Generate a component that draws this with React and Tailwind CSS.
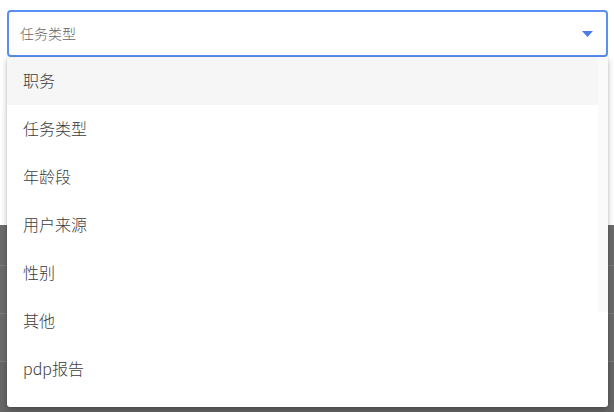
import React from 'react';

const options = ['职务', '任务类型', '年龄段', '用户来源', '性别', '其他', 'pdp报告'];

const App = () => {
  return (
    <div
      className="relative w-[614px] h-[412px] overflow-hidden bg-white"
      style={{ fontFamily: '"Noto Sans CJK SC", "Noto Sans", sans-serif' }}
    >
      {/* page behind the dropdown */}
      <div className="flex flex-col h-full">
        <div className="h-[225px] bg-white" />
        <div className="flex-1 bg-[#6b6b6b] flex flex-col">
          <div className="h-[41px] border-b border-[#7c7c7c]" />
          <div className="h-[48px] border-b border-[#7c7c7c]" />
          <div className="h-[48px] border-b border-[#7c7c7c]" />
          <div className="flex-1 bg-[#666666]" />
        </div>
      </div>

      {/* select */}
      <div className="absolute left-[7px] top-[10px] w-[601px]">
        <div className="h-[47px] flex items-center justify-between pl-[11px] pr-[13px] bg-white border-2 border-[#5a8ef0] rounded-[4px]">
          <span className="text-[14px] text-[#666666] font-light">任务类型</span>
          <svg width="11" height="6" viewBox="0 0 11 6">
            <path d="M0 0 L11 0 L5.5 6 Z" fill="#4a7ee6" />
          </svg>
        </div>

        <div className="relative h-[350px] bg-white rounded-b-[3px] shadow-[0_3px_6px_rgba(0,0,0,0.25),0_0_2px_rgba(0,0,0,0.12)] overflow-hidden">
          <div>
            {options.map((o, i) => (
              <div
                key={o}
                className={`h-[48px] flex items-center pl-[16px] pb-[2px] text-[16px] font-light text-[#3c3c3c] ${
                  i === 0 ? 'bg-[#f6f6f6]' : ''
                }`}
              >
                {o}
              </div>
            ))}
          </div>
          <div className="absolute right-0 top-0 w-[10px] h-[255px] bg-[#fafafa]" />
        </div>
      </div>
    </div>
  );
};

export default App;
